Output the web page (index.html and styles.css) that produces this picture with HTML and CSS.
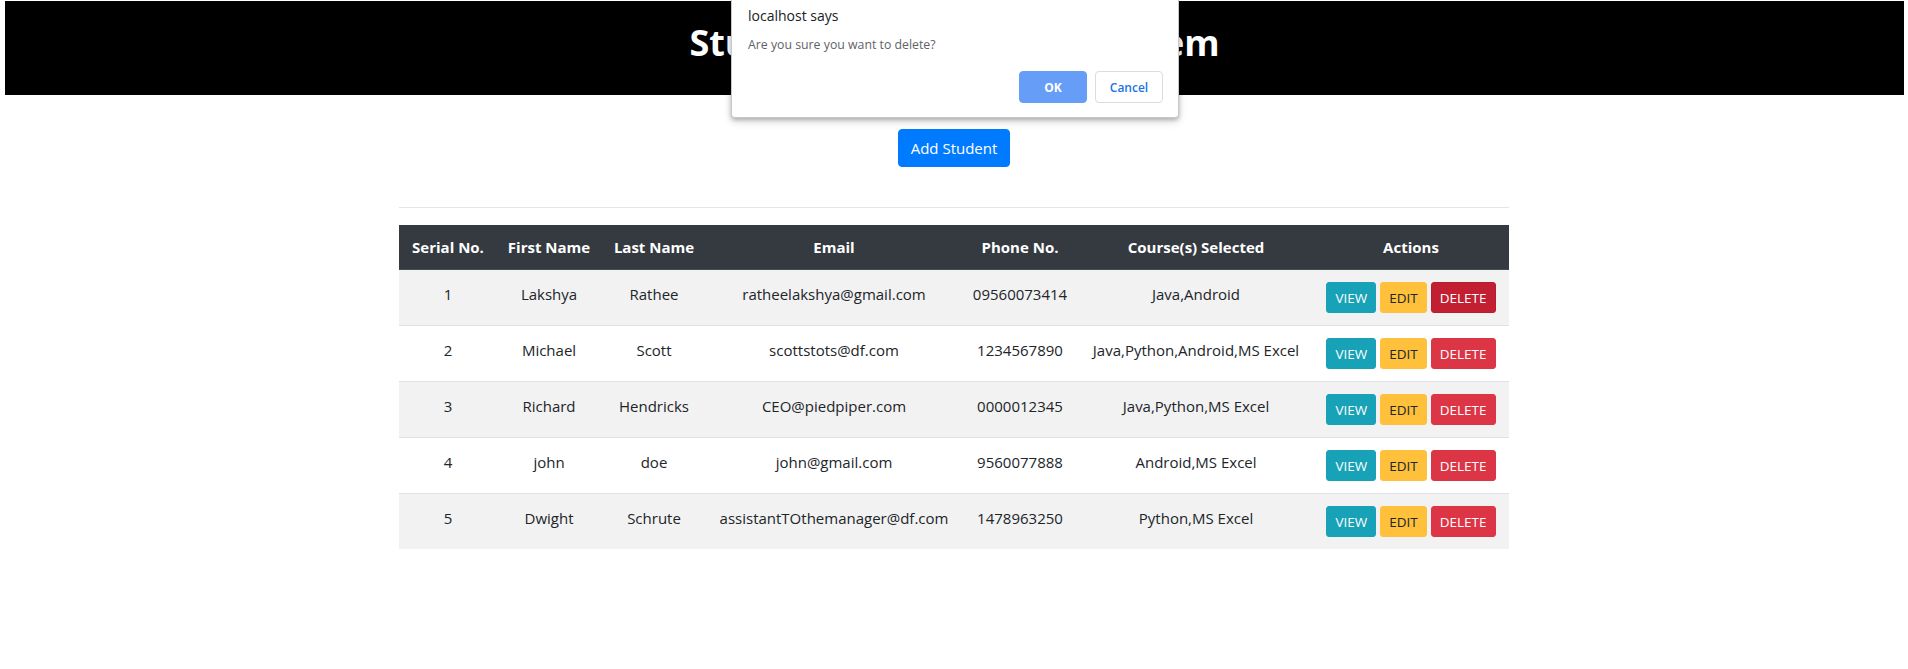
FILE: index.html
```html
<!DOCTYPE html>
<html lang="en">
<head>
<meta charset="utf-8">
<title>Student Management System</title>
<link rel="stylesheet" href="styles.css">
</head>
<body>
<header class="topbar">
  <h1 class="title">Student Management System</h1>
</header>

<main class="container">
  <div class="add-bar">
    <button class="btn-add" type="button">Add Student</button>
  </div>
  <hr class="divider">
  <table class="students">
    <colgroup>
      <col class="c-serial"><col class="c-first"><col class="c-last"><col class="c-email"><col class="c-phone"><col class="c-course"><col class="c-actions">
    </colgroup>
    <thead>
      <tr>
        <th>Serial No.</th><th>First Name</th><th>Last Name</th><th>Email</th><th>Phone No.</th><th>Course(s) Selected</th><th>Actions</th>
      </tr>
    </thead>
    <tbody>
      <tr class="odd">
        <td>1</td><td>Lakshya</td><td>Rathee</td><td>ratheelakshya@gmail.com</td><td>09560073414</td><td>Java,Android</td>
        <td class="td-acts"><div class="acts"><span class="b b-view">VIEW</span><span class="b b-edit">EDIT</span><span class="b b-del b-del-active">DELETE</span></div></td>
      </tr>
      <tr>
        <td>2</td><td>Michael</td><td>Scott</td><td>scottstots@df.com</td><td>1234567890</td><td>Java,Python,Android,MS Excel</td>
        <td class="td-acts"><div class="acts"><span class="b b-view">VIEW</span><span class="b b-edit">EDIT</span><span class="b b-del">DELETE</span></div></td>
      </tr>
      <tr class="odd">
        <td>3</td><td>Richard</td><td>Hendricks</td><td>CEO@piedpiper.com</td><td>0000012345</td><td>Java,Python,MS Excel</td>
        <td class="td-acts"><div class="acts"><span class="b b-view">VIEW</span><span class="b b-edit">EDIT</span><span class="b b-del">DELETE</span></div></td>
      </tr>
      <tr>
        <td>4</td><td>john</td><td>doe</td><td>john@gmail.com</td><td>9560077888</td><td>Android,MS Excel</td>
        <td class="td-acts"><div class="acts"><span class="b b-view">VIEW</span><span class="b b-edit">EDIT</span><span class="b b-del">DELETE</span></div></td>
      </tr>
      <tr class="odd">
        <td>5</td><td>Dwight</td><td>Schrute</td><td>assistantTOthemanager@df.com</td><td>1478963250</td><td>Python,MS Excel</td>
        <td class="td-acts"><div class="acts"><span class="b b-view">VIEW</span><span class="b b-edit">EDIT</span><span class="b b-del">DELETE</span></div></td>
      </tr>
    </tbody>
  </table>
</main>

<div class="dialog" role="dialog">
  <div class="dlg-title">localhost says</div>
  <div class="dlg-msg">Are you sure you want to delete?</div>
  <div class="dlg-btns">
    <button class="dlg-ok" type="button">OK</button>
    <button class="dlg-cancel" type="button">Cancel</button>
  </div>
</div>
</body>
</html>
```

FILE: styles.css
```css
* { box-sizing: border-box; }

body {
  margin: 0;
  font-family: "Open Sans", "Noto Sans", sans-serif;
  color: #212529;
  background: #fff;
}

.topbar {
  margin: 1px 4px 0 5px;
  height: 94px;
  background: #000;
  display: flex;
  justify-content: center;
  align-items: flex-start;
  padding-top: 19px;
}

.title {
  margin: 0;
  color: #fff;
  font-size: 36px;
  line-height: 46px;
  font-weight: 700;
}

.container {
  width: 1110px;
  margin: 0 auto;
}

.add-bar {
  display: flex;
  justify-content: center;
  margin-top: 34px;
}

.btn-add {
  font-family: inherit;
  background: #007bff;
  color: #fff;
  border: 1px solid #007bff;
  border-radius: 4px;
  padding: 6px 12px;
  font-size: 15px;
  line-height: 24px;
}

.divider {
  margin: 40px 0 17px;
  border: 0;
  border-top: 1px solid rgba(0, 0, 0, 0.1);
  height: 0;
}

.students {
  width: 1110px;
  border-collapse: collapse;
  table-layout: fixed;
}

.c-serial { width: 98px; }
.c-first { width: 104px; }
.c-last { width: 106px; }
.c-email { width: 254px; }
.c-phone { width: 118px; }
.c-course { width: 234px; }
.c-actions { width: 196px; }

.students th {
  background: #343a40;
  color: #fff;
  font-weight: 700;
  font-size: 15px;
  line-height: 24px;
  padding: 10px 4px;
  border-bottom: 1px solid #454d55;
  text-align: center;
  white-space: nowrap;
}

.students td {
  padding: 8px 4px 16px;
  border-top: 1px solid #dee2e6;
  text-align: center;
  vertical-align: middle;
  font-size: 15px;
  line-height: 24px;
  white-space: nowrap;
}

.students td.td-acts { padding: 12px 4px; }

.students tbody tr:first-child td { border-top: 0; }

.students tr.odd td { background: #f2f2f2; }

.acts {
  display: flex;
  justify-content: center;
  gap: 4px;
}

.b {
  display: inline-block;
  height: 31px;
  padding: 5px 8px 4px;
  font-size: 13.5px;
  line-height: 20px;
  border: 1px solid transparent;
  border-radius: 3px;
}

.b-view { background: #17a2b8; border-color: #17a2b8; color: #fff; }
.b-edit { background: #ffc13b; border-color: #ffc13b; color: #212529; }
.b-del { background: #dc3545; border-color: #dc3545; color: #fff; }
.b-del-active { background: #c21f32; border-color: #b81d2e; }

.dialog {
  position: absolute;
  top: 0;
  left: 731px;
  width: 448px;
  height: 118px;
  background: #fff;
  border: 1px solid #c8c8c8;
  border-top: 0;
  border-radius: 0 0 4px 4px;
  box-shadow: 0 2px 4px rgba(0, 0, 0, 0.25), 0 4px 10px rgba(0, 0, 0, 0.12);
  padding: 6px 15px 0 16px;
  display: flex;
  flex-direction: column;
  font-family: "Open Sans", "Noto Sans", sans-serif;
}

.dlg-title {
  font-size: 14px;
  line-height: 20px;
  color: #202124;
}

.dlg-msg {
  margin-top: 10px;
  font-size: 12.3px;
  line-height: 18px;
  color: #5f6368;
}

.dlg-btns {
  margin-top: 17px;
  display: flex;
  justify-content: flex-end;
  gap: 8px;
}

.dlg-ok, .dlg-cancel {
  font-family: inherit;
  width: 68px;
  height: 32px;
  border-radius: 4px;
  font-size: 12px;
  padding: 0;
}

.dlg-ok {
  background: #669df6;
  border: 1px solid #669df6;
  color: #fff;
  font-weight: 700;
}

.dlg-cancel {
  background: #fff;
  border: 1px solid #dadce0;
  color: #1a73e8;
  font-weight: 600;
}
```
